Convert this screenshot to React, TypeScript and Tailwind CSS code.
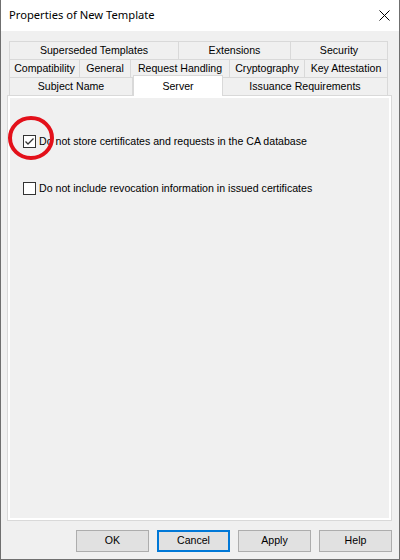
import React from 'react';

type Tab = { label: string; w: number; selected?: boolean };

const rows: Tab[][] = [
  [
    { label: 'Superseded Templates', w: 170 },
    { label: 'Extensions', w: 112 },
    { label: 'Security', w: 97 },
  ],
  [
    { label: 'Compatibility', w: 71 },
    { label: 'General', w: 51 },
    { label: 'Request Handling', w: 99 },
    { label: 'Cryptography', w: 75 },
    { label: 'Key Attestation', w: 83 },
  ],
  [
    { label: 'Subject Name', w: 124 },
    { label: 'Server', w: 90, selected: true },
    { label: 'Issuance Requirements', w: 165 },
  ],
];

const Checkbox: React.FC<{ checked?: boolean }> = ({ checked }) => (
  <div className="w-[13px] h-[13px] border border-[#333333] bg-white flex items-center justify-center shrink-0">
    {checked && (
      <svg width="11" height="11" viewBox="0 0 11 11">
        <path d="M1.5 5.5 L4 8 L9.5 2.5" fill="none" stroke="#333333" strokeWidth="1.3" />
      </svg>
    )}
  </div>
);

const Button: React.FC<{ label: string; focused?: boolean }> = ({ label, focused }) => (
  <div
    className={
      focused
        ? 'w-[73px] h-[22px] border-2 border-[#0078d7] bg-[#e1e1e1] flex items-center justify-center'
        : 'w-[73px] h-[22px] border border-[#adadad] bg-[#e1e1e1] flex items-center justify-center'
    }
  >
    {label}
  </div>
);

export default function App() {
  return (
    <div
      className="w-[400px] h-[560px] flex flex-col border-l border-r border-b border-[#6f6f6f] bg-[#f0f0f0] text-[10.6px] text-black"
      style={{ fontFamily: '"Liberation Sans", Arial, sans-serif' }}
    >
      {/* Title bar */}
      <div className="h-[31px] bg-white flex items-center justify-between pl-[8px] pr-[9px] shrink-0">
        <span className="text-[11.2px]" style={{ fontFamily: '"Noto Sans", sans-serif' }}>
          Properties of New Template
        </span>
        <svg width="11" height="11" viewBox="0 0 11 11">
          <path d="M0.5 0.5 L10.5 10.5 M10.5 0.5 L0.5 10.5" stroke="#000" strokeWidth="1" />
        </svg>
      </div>

      {/* Body */}
      <div className="flex-1 flex flex-col pt-[10px] pl-[6px] pr-[7px]">
        {/* Tabs */}
        <div className="flex flex-col px-[2px]">
          {rows.map((row, ri) => (
            <div key={ri} className="flex h-[18px] items-start">
              {row.map((t, ti) =>
                t.selected ? (
                  <div
                    key={ti}
                    className="relative z-10 -mt-[2px] h-[21px] bg-white border-t border-l border-r border-[#d9d9d9] flex items-start justify-center pt-[3px]"
                    style={{ width: t.w }}
                  >
                    {t.label}
                  </div>
                ) : (
                  <div
                    key={ti}
                    className={
                      'h-[18px] border-t border-r border-[#d9d9d9] flex items-center justify-center ' +
                      (ti === 0 ? 'border-l' : '')
                    }
                    style={{ width: t.w }}
                  >
                    {t.label}
                  </div>
                )
              )}
            </div>
          ))}
        </div>

        {/* Panel */}
        <div className="relative h-[426px] border border-[#d9d9d9] bg-white p-[2px]">
          <div className="h-full bg-[#f0f0f0] flex flex-col pl-[13px] pt-[37px] gap-[34px]">
            <div className="flex items-center gap-[3px] h-[13px] leading-[13px]">
              <Checkbox checked />
              <span>Do not store certificates and requests in the CA database</span>
            </div>
            <div className="flex items-center gap-[3px] h-[13px] leading-[13px]">
              <Checkbox />
              <span>Do not include revocation information in issued certificates</span>
            </div>
          </div>
          {/* Red annotation circle */}
          <svg className="absolute -left-[3px] top-[17px]" width="52" height="50" viewBox="0 0 52 50">
            <ellipse cx="26" cy="25" rx="21" ry="20" fill="none" stroke="#e3101a" strokeWidth="4" />
          </svg>
        </div>

        {/* Buttons */}
        <div className="flex justify-end gap-[8px] mt-[9px]">
          <Button label="OK" />
          <Button label="Cancel" focused />
          <Button label="Apply" />
          <Button label="Help" />
        </div>
      </div>
    </div>
  );
}
